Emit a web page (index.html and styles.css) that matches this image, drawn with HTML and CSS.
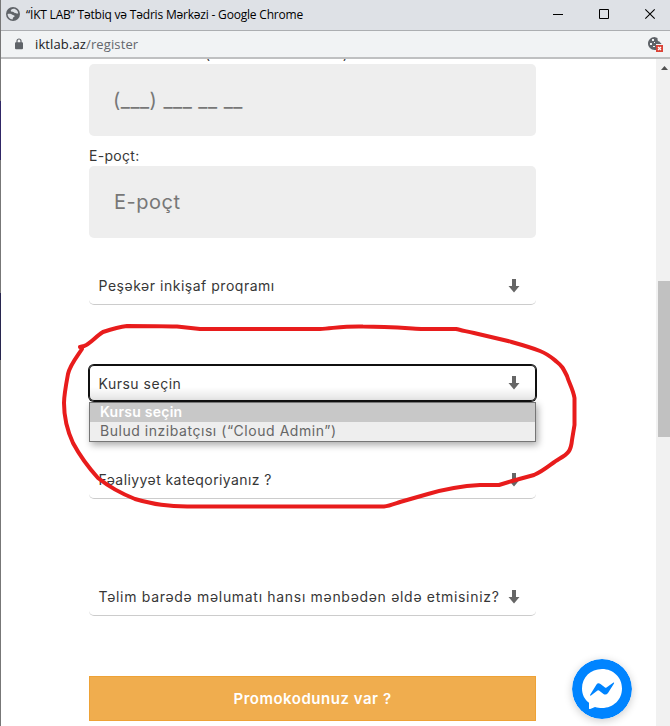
FILE: index.html
```html
<!DOCTYPE html>
<html lang="az">
<head>
<meta charset="utf-8">
<title>“İKT LAB” Tətbiq və Tədris Mərkəzi</title>
<link rel="stylesheet" href="styles.css">
</head>
<body>
<div class="window">
  <header class="titlebar">
    <svg class="globe" width="14" height="14" viewBox="0 0 14 14"><circle cx="7" cy="7" r="7" fill="#5f6368"/><path d="M8.500 1.800C6 1.500 4.600 2.700 4.800 4C5 5.300 7.500 4.500 8.200 5.600C8.800 6.500 10.300 6.500 12.200 6.400C12 4.200 10.700 2.400 8.500 1.800ZM1.600 7C3.600 6.700 5.300 6.800 6 7.600C6.800 8.400 8.600 8.200 8.600 9.300C8.600 10.300 7 10 6.900 11L6.600 12.400C4 12.200 1.600 10 1.600 7Z" fill="#dee1e6"/></svg>
    <span class="title">“İKT LAB” Tətbiq və Tədris Mərkəzi - Google Chrome</span>
    <svg class="controls" width="104" height="12" viewBox="0 0 104 12" fill="none" stroke="#000"><path d="M0 6.500H10M46.500 1.500H55.500V10.500H46.500Z"/><path d="M92.300 1.300L101.700 10.700M101.700 1.300L92.300 10.700" stroke-width="1.100"/></svg>
  </header>
  <div class="address">
    <svg class="lock" width="8" height="12" viewBox="0 0 8 12"><path d="M2 5V3A2 2 0 0 1 6 3V5" fill="none" stroke="#5f6368" stroke-width="1.200"/><rect y="4.200" width="8" height="7" rx="1" fill="#5f6368"/></svg>
    <span class="url">iktlab.az<span class="path">/register</span></span>
    <svg class="cookie" width="16" height="16" viewBox="0 0 16 16"><path d="M6.500 1C3 1 0 4 0 7.500S3 14 6.500 14H8V8H13.500C13 6.500 12 7 11.500 5.500C9.500 5.500 9.500 4 9.500 2Z" fill="#5f6368"/><path d="M4 3h2v2H4zM2 7h2v2H2zM6 6h1v1H6zM5 10h2v1H5z" fill="#f1f3f4"/><rect x="8" y="9" width="7" height="7" fill="#db4437"/><path d="M10 11L13 14M13 11L10 14" stroke="#fff" stroke-width="1.200"/></svg>
  </div>
  <div class="viewport">
    <main class="form">
      <label class="label clipped"><span class="t-phone">Mobil nömrə</span><span class="t-hint">(Misal: 055 555 55 55)</span></label>
      <div class="input"><span class="t-mask">(___) ___ __ __</span></div>
      <label class="label"><span class="t-label">E-poçt:</span></label>
      <div class="input"><span class="t-email">E-poçt</span></div>
      <div class="select first"><span class="t-s1">Peşəkər inkişaf proqramı</span><svg class="arrow" width="12" height="14" viewBox="0 0 12 14"><path d="M4 0H8V7H11.500L6 13.500L.5 7H4Z" fill="#666"/></svg></div>
      <div class="select focused"><span class="t-s2">Kursu seçin</span><svg class="arrow" width="12" height="14" viewBox="0 0 12 14"><path d="M4 0H8V7H11.500L6 13.500L.5 7H4Z" fill="#666"/></svg>
        <div class="popup">
          <div class="option active"><span class="t-o1">Kursu seçin</span></div>
          <div class="option"><span class="t-o2">Bulud inzibatçısı (“Cloud Admin”)</span></div>
        </div>
      </div>
      <div class="select"><span class="t-s3">Fəaliyyət kateqoriyanız ?</span><svg class="arrow" width="12" height="14" viewBox="0 0 12 14"><path d="M4 0H8V7H11.500L6 13.500L.5 7H4Z" fill="#666"/></svg></div>
      <div class="select last"><span class="t-s4">Təlim barədə məlumatı hansı mənbədən əldə etmisiniz?</span><svg class="arrow" width="12" height="14" viewBox="0 0 12 14"><path d="M4 0H8V7H11.500L6 13.500L.5 7H4Z" fill="#666"/></svg></div>
      <div class="promo"><span class="t-promo">Promokodunuz var ?</span></div>
    </main>
    <aside class="scrollbar"><svg class="up" width="7" height="4" viewBox="0 0 7 4"><path d="M0 4L3.500 0L7 4Z" fill="#505050"/></svg><div class="thumb"></div></aside>
  </div>
</div>
<svg class="chat" width="60" height="60" viewBox="0 0 60 60"><circle cx="30" cy="30" r="30" fill="#0084ff"/><path d="M30 10C18.500 10 10 18.400 10 29.400C10 35.500 12.500 40.200 17 43.800V49.500Q17.200 50.400 18.200 50L23 48C25.500 48.700 27.500 49 30 49C41.500 49 50 40.500 50 29.500S41.500 10 30 10Z" fill="#fff"/><path d="M18 36L24.500 25.500Q26 23.500 28.500 25L33 28.500Q33.700 29 34.500 28.500L41.500 23.500Q42.500 23.200 42 24.500L36 34Q34 36.500 31.500 35L27 31.500Q26.200 31 25.500 31.500L19 36.500Q18 37 18 36Z" fill="#0084ff"/></svg>
<svg class="scribble" width="670" height="726" viewBox="0 0 670 726" fill="none" stroke="#e81c1c" stroke-width="4" stroke-linecap="round" stroke-linejoin="round"><path d="M82 349C76 358 70 365 68 374C65 390 64 397 64 403C64 417 67 430 73 443C80 456 89 468 98 478C108 486 120 493 135 499C153 504 168 507 192 506.500H384C389 506 394 504 400 502L428 494C445 489 462 486 480 485H499L512 481L534 475C544 471 552 463 559 459C568 454 571 451 572 440L574.500 425V398C573 389 569 383 567 376C563 368 562 366 557 362C551 357 548 354 540 351C530 347 515 343 508 341L474 333C465 331 460 330 456 329H423C405 328 385 326.500 363 326.500C345 326 335 328 320 329H200L177 326.500C160 326 140 326 127 326C118 327 109 330 103 332C95 337 90 344 84 346L80 347"/></svg>
</body>
</html>
```
FILE: styles.css
```css
* { box-sizing: border-box; }
body { margin: 0; background: #fff; font-family: Inter, "Noto Sans", sans-serif; font-size: 14px; color: #373737; overflow: hidden; }
.window { height: 726px; display: flex; flex-direction: column; border-style: solid; border-width: 0 0 0 1px; border-image: linear-gradient(#777 102px, #302766 102px, #302766 161px, #777 161px, #777 293px, #28264f 293px, #28264f 360px, #777 360px) 1; }
.titlebar { height: 31px; flex: none; display: flex; align-items: center; padding: 0 13px 2px 5px; background: #dee1e6; border-bottom: 1px solid #acaeb1; }
.title { margin: 2px 0 0 6px; font: 12px/16px "Open Sans", sans-serif; letter-spacing: -.2px; color: #000; white-space: nowrap; }
.controls { margin-left: auto; }
.address { height: 28px; flex: none; display: flex; align-items: center; padding: 0 6px 0 14px; background: #f1f3f4; border-bottom: 2px solid #bfc0c1; }
.url { margin-left: 12px; font: 13px/18px "Open Sans", sans-serif; letter-spacing: .12px; color: #202124; }
.path { color: #63676c; }
.cookie { margin-left: auto; }
.viewport { flex: 1; min-height: 0; display: flex; justify-content: space-between; overflow: hidden; }
.form { width: 447px; margin-left: 88px; }
.form span { white-space: nowrap; display: inline-block; }
.label { display: block; height: 30px; padding-top: 10px; line-height: 20px; }
.clipped { height: 20px; padding: 0; margin-top: -15px; display: flex; }
.t-phone { width: 116px; }
.t-hint { letter-spacing: -.35px; }
.input { height: 72px; padding: 0 25px; display: flex; align-items: center; border-radius: 5px; background: #eee; color: #777; font-size: 20px; }
.select { position: relative; height: 38px; display: flex; align-items: center; justify-content: space-between; padding: 0 16px 0 9.5px; border-bottom: 1px solid #ccc; border-radius: 5px; margin-bottom: 59px; }
.select.first { margin-top: 29px; }
.select.last { margin-top: 79px; margin-bottom: 60px; }
.select.focused { box-shadow: 0 0 0 1px #101010, inset 0 0 0 1px #101010; border-bottom: 0; height: 36px; margin-top: 60px; margin-bottom: 60px; }
.focused::after { content: ""; position: absolute; left: 1px; right: 1px; bottom: 1px; height: 13px; background: linear-gradient(transparent, #0000001a); }
.popup { position: absolute; z-index: 2; left: 0; top: 37px; width: 447px; height: 40px; border: 1px solid #767676; background: #eee; box-shadow: 2px 3px 7px #0005; color: #666; }
.option { height: 19px; padding-left: 10px; line-height: 18px; }
.option.active { background: #c8c8c8; color: #fff; font-weight: 600; }
.promo { height: 45px; display: flex; align-items: center; justify-content: center; background: #f0ad4e; border: 1px solid #eea236; color: #fff; font-size: 15px; font-weight: 600; }
.t-mask { letter-spacing: .48px; margin-left: -1px; }
.t-email { letter-spacing: .5px; }
.t-label { letter-spacing: .3px; }
.t-s1 { letter-spacing: .52px; }
.t-s2 { letter-spacing: .5px; }
.t-o1 { letter-spacing: .25px; }
.t-o2 { letter-spacing: .54px; }
.t-s3 { letter-spacing: .42px; }
.t-s4 { letter-spacing: .69px; }
.t-promo { letter-spacing: .52px; }
.scrollbar { width: 14px; background: #f1f1f1; padding: 7px 0 0 2px; }
.up { display: block; margin-left: 3px; }
.thumb { margin-top: 211px; height: 156px; background: #c1c1c1; }
.chat { position: absolute; left: 572px; top: 659px; border-radius: 50%; box-shadow: 0 2px 8px #0003; }
.scribble { position: absolute; left: 0; top: 0; z-index: 5; }
```
